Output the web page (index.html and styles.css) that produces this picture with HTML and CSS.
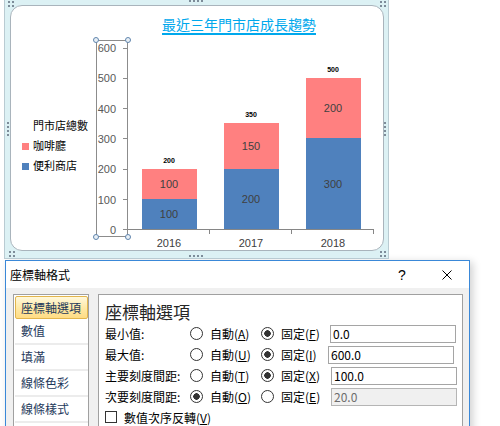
FILE: index.html
```html
<!DOCTYPE html>
<html lang="zh-Hant">
<head>
    <meta charset="UTF-8">
    <meta name="viewport" content="width=device-width, initial-scale=1.0">
    <title>座標軸格式</title>

    <link rel="stylesheet" href="styles.css">
</head>
<body>
    <div class="frame">
        <span class="grip grip-tl"></span>
        <span class="grip grip-tm"></span>
        <span class="grip grip-tr"></span>
        <span class="grip grip-ml"></span>
        <span class="grip grip-mr"></span>
        <span class="grip grip-bl"></span>
        <span class="grip grip-bm"></span>
        <span class="grip grip-br"></span>

        <div class="chart">
            <div class="chart-title">最近三年門市店成長趨勢</div>

            <div class="chart-body">
                <div class="legend">
                    <div class="legend-title">門市店總數</div>
                    <div class="legend-item"><span class="swatch cafe"></span>咖啡廳</div>
                    <div class="legend-item"><span class="swatch store"></span>便利商店</div>
                </div>

                <div class="axis">
                    <span class="handle tl"></span>
                    <span class="handle tr"></span>
                    <span class="handle bl"></span>
                    <span class="handle br"></span>

                    <div class="tick-label">600<i></i></div>
                    <div class="tick-label">500<i></i></div>
                    <div class="tick-label">400<i></i></div>
                    <div class="tick-label">300<i></i></div>
                    <div class="tick-label">200<i></i></div>
                    <div class="tick-label">100<i></i></div>
                    <div class="tick-label">0<i></i></div>
                </div>

                <div class="plot">
                    <div class="bars">
                        <div class="cat">
                            <div class="total">200</div>
                            <div class="seg cafe" style="height: 30px">100</div>
                            <div class="seg store" style="height: 30px">100</div>
                        </div>
                        <div class="cat">
                            <div class="total">350</div>
                            <div class="seg cafe" style="height: 46px">150</div>
                            <div class="seg store" style="height: 60px">200</div>
                        </div>
                        <div class="cat">
                            <div class="total">500</div>
                            <div class="seg cafe" style="height: 60px">200</div>
                            <div class="seg store" style="height: 91px">300</div>
                        </div>
                    </div>
                    <div class="ticks"><span></span><span></span><span></span></div>
                    <div class="years">
                        <span>2016</span>
                        <span>2017</span>
                        <span>2018</span>
                    </div>
                </div>
            </div>
        </div>
    </div>

    <div class="dialog">
        <div class="titlebar">
            <span class="title">座標軸格式</span>
            <span class="cap-btn">?</span>
            <span class="cap-btn close">
                <svg width="10" height="10" viewBox="0 0 10 10">
                    <path d="M0.5 0.5L9.5 9.5M9.5 0.5L0.5 9.5" stroke="#000" stroke-width="1" fill="none"/>
                </svg>
            </span>
        </div>

        <div class="dialog-body">
            <ul class="nav">
                <li class="active">座標軸選項</li>
                <li>數值</li>
                <li>填滿</li>
                <li>線條色彩</li>
                <li>線條樣式</li>
            </ul>

            <div class="pane">
                <h2>座標軸選項</h2>

                <div class="form">
                    <span class="label">最小值:</span>
                    <label class="opt"><span class="radio"></span><span>自動(<u>A</u>)</span></label>
                    <label class="opt"><span class="radio on"></span><span>固定(<u>F</u>)</span></label>
                    <input class="field" type="text" value="0.0">

                    <span class="label">最大值:</span>
                    <label class="opt"><span class="radio"></span><span>自動(<u>U</u>)</span></label>
                    <label class="opt"><span class="radio on"></span><span>固定(<u>I</u>)</span></label>
                    <input class="field shift-left" type="text" value="600.0">

                    <span class="label">主要刻度間距:</span>
                    <label class="opt"><span class="radio"></span><span>自動(<u>T</u>)</span></label>
                    <label class="opt"><span class="radio on"></span><span>固定(<u>X</u>)</span></label>
                    <input class="field shift-right" type="text" value="100.0">

                    <span class="label">次要刻度間距:</span>
                    <label class="opt"><span class="radio on"></span><span>自動(<u>O</u>)</span></label>
                    <label class="opt"><span class="radio"></span><span>固定(<u>E</u>)</span></label>
                    <input class="field shift-right" type="text" value="20.0" disabled>
                </div>

                <label class="check"><span class="box"></span><span>數值次序反轉(<u>V</u>)</span></label>
            </div>
        </div>
    </div>
</body>
</html>
```

FILE: styles.css
```css
html, body {
    height: 100%;
    overflow: hidden;
}

body {
    margin: 0;
    background: #fff;
    font-family: "Liberation Sans", "Noto Sans CJK TC", sans-serif;
}

/* chart selection frame */

.frame {
    position: relative;
    width: 385px;
    height: 259px;
    margin-left: 4px;
    padding: 5px 4px 7px 5px;
    box-sizing: border-box;
    background: #dcf1f4;
    border: 1px solid #b9cbd2;
    border-top: none;
}

.grip {
    position: absolute;
    background: radial-gradient(#7d8c99 1px, transparent 1.5px) 0 0 / 4px 4px;
}

.grip-tl { left: 2px; top: 0; width: 8px; height: 8px; }
.grip-tr { left: 374px; top: 0; width: 8px; height: 8px; }
.grip-tm { left: 183px; top: -1px; width: 16px; height: 4px; }
.grip-ml { left: 1px; top: 121px; width: 4px; height: 16px; }
.grip-mr { left: 378px; top: 121px; width: 4px; height: 16px; }
.grip-bl { left: 3px; top: 250px; width: 8px; height: 8px; }
.grip-bm { left: 183px; top: 254px; width: 16px; height: 4px; }
.grip-br { left: 374px; top: 250px; width: 8px; height: 8px; }

.chart {
    height: 100%;
    box-sizing: border-box;
    background: #fff;
    border: 1px solid #a9b4bc;
    border-radius: 12px;
    display: flex;
    flex-direction: column;
    align-items: flex-start;
}

.chart-title {
    margin: 10px 0 0 151px;
    padding-bottom: 1px;
    border-bottom: 2px solid #00a8ec;
    color: #00a8ec;
    font-family: "Noto Sans CJK TC", sans-serif;
    font-size: 14px;
    line-height: 16px;
}

.chart-body {
    display: flex;
    align-items: flex-start;
    margin-top: 5px;
}

.legend {
    width: 85px;
    padding: 76px 0 0 11px;
    box-sizing: border-box;
    font-size: 11px;
    line-height: 20px;
    color: #000;
}

.legend-title {
    margin-left: 11px;
}

.legend-item {
    display: flex;
    align-items: center;
    gap: 4px;
}

.swatch {
    width: 7px;
    height: 7px;
}

.cafe {
    background: #ff8080;
}

.store {
    background: #4f81bd;
}

/* selected value axis */

.axis {
    position: relative;
    width: 32px;
    height: 197px;
    box-sizing: border-box;
    border: 1px solid #8c8c8c;
    padding-top: 1px;
    display: flex;
    flex-direction: column;
    justify-content: space-between;
    font-size: 11px;
    line-height: 12px;
    color: #595959;
}

.tick-label {
    display: flex;
    justify-content: flex-end;
    align-items: center;
}

.tick-label i {
    width: 4px;
    height: 1px;
    margin-left: 7px;
    background: #8c8c8c;
}

.handle {
    position: absolute;
    width: 4px;
    height: 4px;
    border: 1px solid #6085ad;
    border-radius: 50%;
    background: #e9f0f6;
}

.handle.tl { left: -4px; top: -4px; }
.handle.tr { right: -4px; top: -4px; }
.handle.bl { left: -4px; bottom: -4px; }
.handle.br { right: -4px; bottom: -4px; }

.plot {
    width: 246px;
    font-size: 11px;
    color: #404040;
}

.bars {
    height: 189px;
    display: flex;
    align-items: flex-end;
    border-bottom: 1px solid #868686;
}

.cat {
    width: 82px;
    display: flex;
    flex-direction: column;
    align-items: center;
}

.total {
    margin-bottom: 4px;
    font-size: 7px;
    font-weight: bold;
    line-height: 8px;
    color: #000;
}

.seg {
    width: 55px;
    display: flex;
    align-items: center;
    justify-content: center;
}

.ticks {
    display: flex;
    height: 4px;
}

.ticks span {
    width: 82px;
    box-sizing: border-box;
    border-right: 1px solid #868686;
}

.years {
    display: flex;
    margin-top: 2px;
    line-height: 14px;
}

.years span {
    width: 82px;
    text-align: center;
}

/* format axis dialog */

.dialog {
    width: 465px;
    margin: 1px 0 0 5px;
    box-sizing: border-box;
    border: 1px solid #3a88d8;
    background: #f0f0f0;
    box-shadow: 3px 2px 8px rgba(0, 0, 0, 0.18);
    font-family: "Noto Sans CJK TC", sans-serif;
    font-size: 12px;
    color: #000;
}

.titlebar {
    height: 27px;
    display: flex;
    align-items: center;
    background: #fff;
}

.title {
    flex: 1;
    padding-left: 4px;
}

.cap-btn {
    width: 46px;
    height: 27px;
    display: flex;
    align-items: center;
    justify-content: center;
    font-family: "Liberation Sans", sans-serif;
    font-size: 14px;
}

.cap-btn.close {
    width: 44px;
}

.dialog-body {
    display: flex;
    gap: 9px;
    height: 150px;
    padding: 6px 6px 0 7px;
}

.nav {
    width: 76px;
    margin: 0;
    padding: 1px 0 0 1px;
    box-sizing: border-box;
    list-style: none;
    background: #fff;
    border: 1px solid #a0a0a0;
}

.nav li {
    height: 24px;
    padding-left: 6px;
    line-height: 24px;
    color: #1e395b;
    border-bottom: 2px solid #ececec;
}

.nav li.active {
    height: 23px;
    box-sizing: border-box;
    padding-left: 5px;
    line-height: 21px;
    border: 1px solid #e2b54c;
    border-radius: 2px;
    background: linear-gradient(#fff8dc, #ffeaa8 50%, #ffdc84);
}

.pane {
    flex: 1;
    padding: 7px 6px 0;
    background: #fff;
    border: 1px solid #a0a0a0;
}

.pane h2 {
    margin: 0;
    font-size: 17px;
    font-weight: normal;
    line-height: 20px;
    color: #262626;
}

.form {
    display: grid;
    grid-template-columns: 85px 71px 69px 126px;
    grid-auto-rows: 21px;
    align-items: center;
    margin-top: 1px;
}

.label {
    white-space: nowrap;
}

.opt {
    display: flex;
    align-items: center;
    gap: 7px;
    white-space: nowrap;
}

.radio {
    width: 11px;
    height: 11px;
    flex-shrink: 0;
    border: 1px solid #333;
    border-radius: 50%;
    background: #fff;
}

.radio.on {
    background: radial-gradient(circle, #333 0 3px, #fff 3.5px);
}

.field {
    width: 126px;
    height: 18px;
    margin: 0;
    padding: 0 2px;
    box-sizing: border-box;
    border: 1px solid #a5a5a5;
    font-family: inherit;
    font-size: 12px;
    color: #000;
    outline: none;
}

.field.shift-left {
    margin-left: -2px;
}

.field.shift-right {
    margin-left: 1px;
}

.field:disabled {
    background: #f0f0f0;
    color: #6d6d6d;
    border-color: #b5b5b5;
}

.check {
    display: flex;
    align-items: center;
    gap: 7px;
    height: 20px;
}

.check .box {
    width: 10px;
    height: 10px;
    border: 1px solid #333;
    background: #fff;
}
```
